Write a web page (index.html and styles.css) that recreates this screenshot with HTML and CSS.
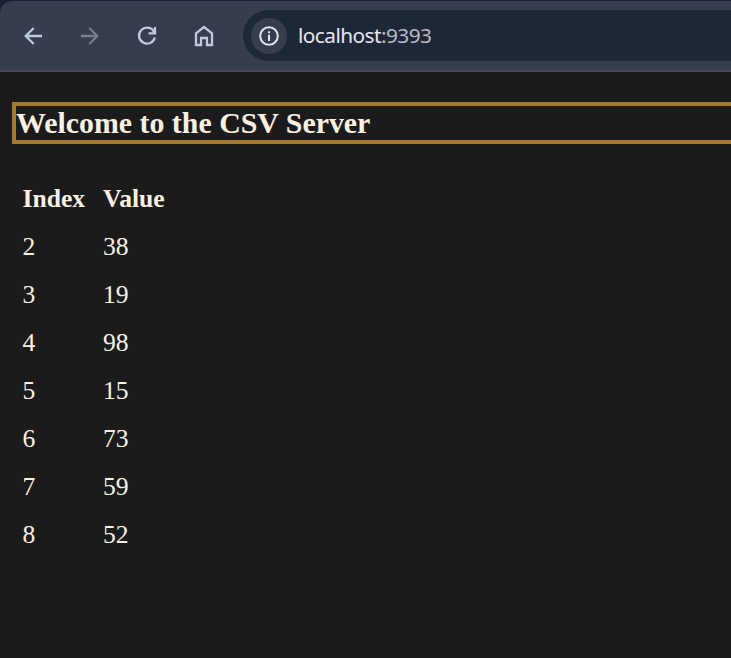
FILE: index.html
```
<!DOCTYPE html>
<html lang="en">
<head>
<meta charset="utf-8">
<title>CSV Server</title>
<link rel="stylesheet" href="styles.css">
</head>
<body>
<div class="frame">
<header class="toolbar">
  <nav class="controls">
    <svg class="icon" viewBox="0 0 24 24"><path d="M21 12H4.5M12.7 4L4.7 12l8 8"/></svg>
    <svg class="icon disabled" viewBox="0 0 24 24"><path d="M3 12h16.5M11.3 4l8 8-8 8"/></svg>
    <svg class="icon" viewBox="0 0 24 24"><path d="M19 7.7A8 8 0 1 0 19.8 13.5M20 3v6.3h-6.5"/></svg>
    <svg class="icon" viewBox="0 0 24 24"><path d="M4 9.3l8-6.3 8 6.3V21h-5v-7H9v7H4z"/></svg>
  </nav>
  <div class="address">
    <span class="info"><svg class="icon" viewBox="0 0 24 24"><circle cx="12" cy="12" r="8.8"/><path d="M12 10.8v6.2M12 7.2v2"/></svg></span>
    <span class="url">localhost<span class="port">:9393</span></span>
  </div>
</header>
<main>
  <h3>Welcome to the CSV Server</h3>
  <table>
    <tr><th>Index</th><th>Value</th></tr>
    <tr><td>2</td><td>38</td></tr>
    <tr><td>3</td><td>19</td></tr>
    <tr><td>4</td><td>98</td></tr>
    <tr><td>5</td><td>15</td></tr>
    <tr><td>6</td><td>73</td></tr>
    <tr><td>7</td><td>59</td></tr>
    <tr><td>8</td><td>52</td></tr>
  </table>
</main>
</div>
</body>
</html>
```
FILE: styles.css
```
* { box-sizing: border-box; }
body { margin: 0; background: #1b1b1b; overflow: hidden; }
.frame { height: 658px; padding-top: 1px; background: linear-gradient(#172032 40px, #1b1b1b 40px); }
.toolbar {
  display: flex;
  height: 71px;
  padding: 9px 0 0 21px;
  background: #353d4e;
  border-bottom: 2px solid #48494b;
  border-top-left-radius: 12px;
}
.controls { display: flex; gap: 33px; align-items: center; height: 51px; width: 222px; }
.icon { display: block; width: 24px; height: 24px; flex: none; fill: none; stroke: #c1cae0; stroke-width: 2.3; }
.disabled { stroke: #777d8c; }
.address {
  display: flex;
  align-items: center;
  flex: 1;
  height: 51px;
  padding-left: 7.5px;
  background: #1e2737;
  border-radius: 26px 0 0 26px;
}
.info { display: grid; place-items: center; width: 36px; height: 36px; border-radius: 50%; background: #353d4e; }
.info .icon { stroke: #e4e6ec; stroke-width: 2; }
.url { margin: 0 0 2px 11.5px; font: 20.8px/28px "Noto Sans", sans-serif; letter-spacing: -0.55px; color: #e6e8ee; }
.port { color: #b9bcc4; }
main { padding: 30px 0 0 12px; font-family: "Liberation Serif", serif; font-size: 25.6px; color: #faf0e2; }
h3 { margin: 0 -4px 29px 0; height: 42px; border: 4px solid #a57b2e; font-size: 29.87px; line-height: 34px; }
table { border-spacing: 3px; border-collapse: separate; margin-left: -2px; }
th, td { height: 45px; padding: 0 4px 0 9.5px; text-align: left; line-height: 30px; }
td:first-child, th:first-child { width: 77.5px; }
```
